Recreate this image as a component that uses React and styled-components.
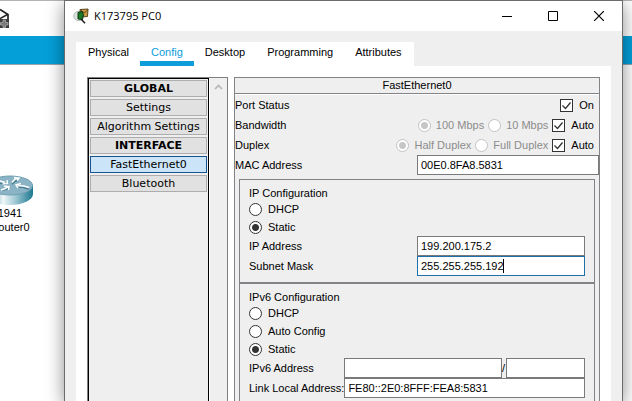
import React from "react";
import styled, { createGlobalStyle, css } from "styled-components";

const Global = createGlobalStyle`
  *, *::before, *::after { box-sizing: border-box; }
  html, body { margin: 0; height: 100%; overflow: hidden; }
  body, input, button {
    font: 11px/14px "Liberation Sans", Arial, sans-serif;
    color: #000;
  }
`;

const Desktop = styled.div`
  position: relative;
  height: 100vh;
  overflow: hidden;
  background: #fff;
  display: flex;
  flex-direction: column;
`;

const MainToolbar = styled.header`
  height: 36px;
  border-top: 1px solid #b4b4b4;
  background: #fff;
  flex: none;
  svg { display: block; margin-top: 7px; }
`;

const BlueBar = styled.div`
  height: 29px;
  background: #049fd9;
  border-bottom: 1px solid #9aa4aa;
  flex: none;
`;

const Workspace = styled.main`
  flex: 1;
`;

const Device = styled.figure`
  position: absolute;
  left: -13px;
  top: 174px;
  width: 46px;
  margin: 0;
  text-align: center;
  svg { display: block; }
`;

const DeviceName = styled.figcaption`
  padding-top: 1px;
  white-space: nowrap;
  span { display: block; }
`;

const Window = styled.section`
  position: absolute;
  left: 64px;
  right: 9px;
  top: 0;
  bottom: 0;
  display: flex;
  flex-direction: column;
  border: 1px solid #6b6b6b;
  border-bottom: 0;
  background: #efefef;
  box-shadow: 0 4px 17px rgba(0, 0, 0, 0.45);
`;

const TitleBar = styled.div`
  flex: none;
  display: flex;
  align-items: center;
  height: 30px;
  padding: 0 16px 0 8px;
  background: #fff;
`;

const Title = styled.h1`
  flex: 1;
  margin: 0 0 0 5px;
  font: 11px/16px "Open Sans", "Noto Sans", sans-serif;
`;

const WindowButton = styled.button`
  display: flex;
  width: 14px;
  height: 14px;
  margin-left: 32px;
  padding: 0;
  border: 0;
  background: none;
  align-items: center;
  justify-content: center;
`;

const Tabs = styled.nav`
  flex: none;
  display: flex;
  align-self: flex-start;
  height: 24px;
  margin: 11px 0 0 11px;
  padding: 0 1px;
  background: #fff;
`;

const Tab = styled.button`
  height: 24px;
  padding: 0 11px;
  border: 0;
  border-bottom: 5px solid ${(p) => (p.$active ? "#0d9ddb" : "transparent")};
  background: none;
  color: ${(p) => (p.$active ? "#0d9ddb" : "#000")};
`;

const Page = styled.div`
  flex: 1;
  min-height: 0;
  display: flex;
  gap: 6px;
  margin: 0 11px;
  padding: 11px 11px 0;
  background: #fff;
`;

const Sidebar = styled.aside`
  flex: none;
  display: flex;
  width: 141px;
  border: 1px solid #7f7f7f;
  border-bottom: 0;
  background: #efefef;
`;

const SectionList = styled.div`
  flex: 1;
  display: flex;
  flex-direction: column;
  gap: 2px;
  padding: 1px;
  border: 1px solid #000;
  border-bottom: 0;
`;

const listItem = css`
  height: 17px;
  margin: 0;
  padding: 0;
  border: 1px solid #adadad;
  background: #e1e1e1;
  font: 11px/16px "DejaVu Sans", Verdana, sans-serif;
  text-align: center;
  white-space: nowrap;
`;

const SectionHeading = styled.h2`
  ${listItem}
  font-weight: bold;
`;

const SectionButton = styled.button`
  ${listItem}
  ${(p) => p.$selected && "background: #cce4f7; border-color: #16558f;"}
`;

const ScrollTrack = styled.div`
  width: 18px;
  padding-top: 6px;
  border-left: 1px solid #fff;
  svg { display: block; margin: 0 auto; }
`;

const Panel = styled.section`
  flex: 1;
  min-width: 0;
  border: 1px solid #838387;
  border-bottom: 0;
  background: #efefef;
  overflow: hidden;
`;

const PanelTitle = styled.h2`
  height: 16px;
  margin: 0 0 1px;
  border-bottom: 1px solid #838387;
  box-shadow: 0 1px 0 #fff;
  font-size: 11px;
  font-weight: normal;
  line-height: 15px;
  text-align: center;
`;

const Row = styled.div`
  display: flex;
  align-items: center;
  height: 20px;
`;

const RowLabel = styled.label`
  flex: 1;
  white-space: nowrap;
`;

const Choices = styled.div`
  display: flex;
  gap: 4px;
  padding-right: 5px;
`;

const Choice = styled.label`
  display: flex;
  align-items: center;
  gap: ${(p) => (p.$muted ? "5px" : "6px")};
  height: ${(p) => (p.$tall ? "18px" : "14px")};
  white-space: nowrap;
  color: ${(p) => (p.$muted ? "#8c8c8c" : "#000")};
`;

const CheckBox = styled.input`
  appearance: none;
  width: 13px;
  height: 13px;
  margin: 0;
  border: 1px solid #333;
  background: #fff;
  &:checked {
    background: #fff url("data:image/svg+xml,%3Csvg xmlns='http://www.w3.org/2000/svg' viewBox='0 0 11 11'%3E%3Cpath d='M1.5 5.5l3 3 5-6' fill='none' stroke='%23333' stroke-width='1.3'/%3E%3C/svg%3E");
  }
`;

const RadioButton = styled.input`
  appearance: none;
  width: 13px;
  height: 13px;
  margin: 0;
  border: 1px solid #333;
  border-radius: 50%;
  background: #fff;
  &:checked { background: radial-gradient(circle, #333 3px, #fff 4px); }
  &:disabled { border-color: #c3c3c3; }
  &:disabled:checked { background: radial-gradient(circle, #c6c6c6 3px, #fff 4px); }
`;

const TextBox = styled.input`
  display: block;
  width: 100%;
  min-width: 0;
  height: 20px;
  padding: 0 3px;
  border: 1px solid ${(p) => (p.$active ? "#1f6fa8" : "#7a7a7a")};
  border-radius: 0;
  outline: 0;
  background: #fff;
`;

const Field = styled.div`
  position: relative;
  display: flex;
  flex: none;
  width: ${(p) => p.$width}px;
`;

const Caret = styled.span`
  position: absolute;
  left: 86px;
  top: 3px;
  width: 1px;
  height: 14px;
  background: #000;
`;

const Slash = styled.span`
  flex: none;
  width: 4px;
  line-height: 20px;
`;

const Group = styled.fieldset`
  min-width: 0;
  margin: 0 4px;
  padding: 7px 9px 6px;
  border: 1px solid #838387;
`;

const Groups = styled.div`
  padding-top: 4px;
`;

const GroupTitle = styled.h3`
  margin: 0;
  font-size: 11px;
  font-weight: normal;
  line-height: 13px;
`;

function RouterIcon() {
  return (
    <svg width="46" height="31" viewBox="0 0 46 31" aria-hidden="true">
      <defs>
        <linearGradient id="side">
          <stop offset="0" stopColor="#2f8199" />
          <stop offset=".35" stopColor="#f1f8fa" />
          <stop offset=".6" stopColor="#a5cbd6" />
          <stop offset="1" stopColor="#1c7890" />
        </linearGradient>
      </defs>
      <path d="M0 11v9c0 6 10 11 23 11s23-5 23-11v-9z" fill="url(#side)" />
      <ellipse cx="23" cy="11.500" rx="22.500" ry="9.500" fill="#8ab4c6" stroke="#6d9fb2" />
      <g id="arrows" fill="none" stroke="#4a7c90" strokeWidth="1.500" transform="translate(0 1.200)">
        <path d="M8 7l5 1 6 1M25 9l3-3 4-1M15 15l4-1 3-1M30 12l6 0 6 2" />
      </g>
      <g fill="none" stroke="#fff" strokeWidth="1.400">
        <path d="M8 6l5 1 5 1.500M20 6l.5 3.500-5 .5" />
        <path d="M25 8.500l3-3.500 3-.5M27 3.500l5 .5-1.500 3" />
        <path d="M14 16l3-1 4-2M17 12l5 .5-.5 3.500" />
        <path d="M42 13.500l-5-1.500-6-.5M34 9.500l-5 1.500 2 3" />
      </g>
    </svg>
  );
}

function EnvelopeIcon() {
  return (
    <svg width="10" height="21" viewBox="0 0 10 21" aria-hidden="true">
      <path d="M0 1.500l8 5V12" fill="none" stroke="#222" strokeWidth="1.700" />
      <path d="M0 10.500l7.500-4" stroke="#222" strokeWidth="1.500" />
      <path d="M0 11h9v9H0z" fill="#3c3c3c" />
      <path d="M.5 14.500h2.500v-2.500h2.500v2.500H8v2.500H5.500v2.500H3V17H.5z" fill="#777" stroke="#b5b5b5" strokeWidth=".7" />
    </svg>
  );
}

function AppIcon() {
  return (
    <svg width="16" height="16" viewBox="0 0 16 16" aria-hidden="true">
      <circle cx="5.500" cy="8" r="4.700" fill="#dde4e0" stroke="#b3bdb8" />
      <path d="M7 1.500l8-.5-.5 7.500-7 .5z" fill="#c79b41" stroke="#4e3a16" strokeWidth=".9" />
      <path d="M7.500 2l4 3 3.500-3.500" fill="none" stroke="#4e3a16" strokeWidth=".9" />
      <path d="M5 4.500l4-1 1.500 3-1 5-4.500-.5z" fill="#1b7a27" stroke="#0b3812" />
      <path d="M8 11l4 4.200" stroke="#222" strokeWidth="1.600" />
    </svg>
  );
}

const tabs = ["Physical", "Config", "Desktop", "Programming", "Attributes"];

function LinkRow({ label, first, second }) {
  return (
    <Row role="group" aria-label={label}>
      <RowLabel as="span">{label}</RowLabel>
      <Choices>
        <Choice $muted><RadioButton type="radio" name={label} defaultChecked disabled />{first}</Choice>
        <Choice $muted><RadioButton type="radio" name={label} disabled />{second}</Choice>
        <Choice><CheckBox type="checkbox" defaultChecked />Auto</Choice>
      </Choices>
    </Row>
  );
}

function RadioOptions({ name, options, value }) {
  return (
    <div role="radiogroup">
      {options.map((o) => (
        <Choice key={o} $tall>
          <RadioButton type="radio" name={name} defaultChecked={o === value} />
          {o}
        </Choice>
      ))}
    </div>
  );
}

export default function App() {
  return (
    <>
      <Global />
      <Desktop>
        <MainToolbar><EnvelopeIcon /></MainToolbar>
        <BlueBar />
        <Workspace>
          <Device>
            <RouterIcon />
            <DeviceName><span>1941</span><span>Router0</span></DeviceName>
          </Device>
        </Workspace>
        <Window>
          <TitleBar>
            <AppIcon />
            <Title>K173795 PC0</Title>
            <WindowButton aria-label="Minimize">
              <svg width="10" height="10"><path d="M0 5.500h10" stroke="#000" /></svg>
            </WindowButton>
            <WindowButton aria-label="Maximize">
              <svg width="10" height="10"><path d="M.5.5h9v9h-9z" fill="none" stroke="#000" /></svg>
            </WindowButton>
            <WindowButton aria-label="Close">
              <svg width="10" height="10"><path d="M0 0l10 10M10 0L0 10" stroke="#000" strokeWidth="1.200" /></svg>
            </WindowButton>
          </TitleBar>
          <Tabs>
            {tabs.map((t) => <Tab key={t} $active={t === "Config"}>{t}</Tab>)}
          </Tabs>
          <Page>
            <Sidebar>
              <SectionList>
                <SectionHeading>GLOBAL</SectionHeading>
                <SectionButton>Settings</SectionButton>
                <SectionButton>Algorithm Settings</SectionButton>
                <SectionHeading>INTERFACE</SectionHeading>
                <SectionButton $selected>FastEthernet0</SectionButton>
                <SectionButton>Bluetooth</SectionButton>
              </SectionList>
              <ScrollTrack>
                <svg width="9" height="6"><path d="M1 5l3.500-3.500L8 5" fill="none" stroke="#b5b5b5" strokeWidth="1.700" /></svg>
              </ScrollTrack>
            </Sidebar>
            <Panel>
              <PanelTitle>FastEthernet0</PanelTitle>
              <Row>
                <RowLabel as="span">Port Status</RowLabel>
                <Choices>
                  <Choice><CheckBox type="checkbox" defaultChecked />On</Choice>
                </Choices>
              </Row>
              <LinkRow label="Bandwidth" first="100 Mbps" second="10 Mbps" />
              <LinkRow label="Duplex" first="Half Duplex" second="Full Duplex" />
              <Row>
                <RowLabel htmlFor="mac">MAC Address</RowLabel>
                <Field $width={182}><TextBox id="mac" defaultValue="00E0.8FA8.5831" /></Field>
              </Row>
              <Groups>
                <Group>
                  <GroupTitle>IP Configuration</GroupTitle>
                  <RadioOptions name="ipv4" options={["DHCP", "Static"]} value="Static" />
                  <Row>
                    <RowLabel htmlFor="ip">IP Address</RowLabel>
                    <Field $width={168}><TextBox id="ip" defaultValue="199.200.175.2" /></Field>
                  </Row>
                  <Row>
                    <RowLabel htmlFor="mask">Subnet Mask</RowLabel>
                    <Field $width={168}>
                      <TextBox id="mask" $active defaultValue="255.255.255.192" />
                      <Caret />
                    </Field>
                  </Row>
                </Group>
                <Group>
                  <GroupTitle>IPv6 Configuration</GroupTitle>
                  <RadioOptions name="ipv6" options={["DHCP", "Auto Config", "Static"]} value="Static" />
                  <Row>
                    <RowLabel htmlFor="ip6">IPv6 Address</RowLabel>
                    <Field $width={158}><TextBox id="ip6" /></Field>
                    <Slash>/</Slash>
                    <Field $width={79}><TextBox aria-label="Prefix length" /></Field>
                  </Row>
                  <Row>
                    <RowLabel htmlFor="link">Link Local Address:</RowLabel>
                    <Field $width={241}><TextBox id="link" defaultValue="FE80::2E0:8FFF:FEA8:5831" /></Field>
                  </Row>
                </Group>
              </Groups>
            </Panel>
          </Page>
        </Window>
      </Desktop>
    </>
  );
}
